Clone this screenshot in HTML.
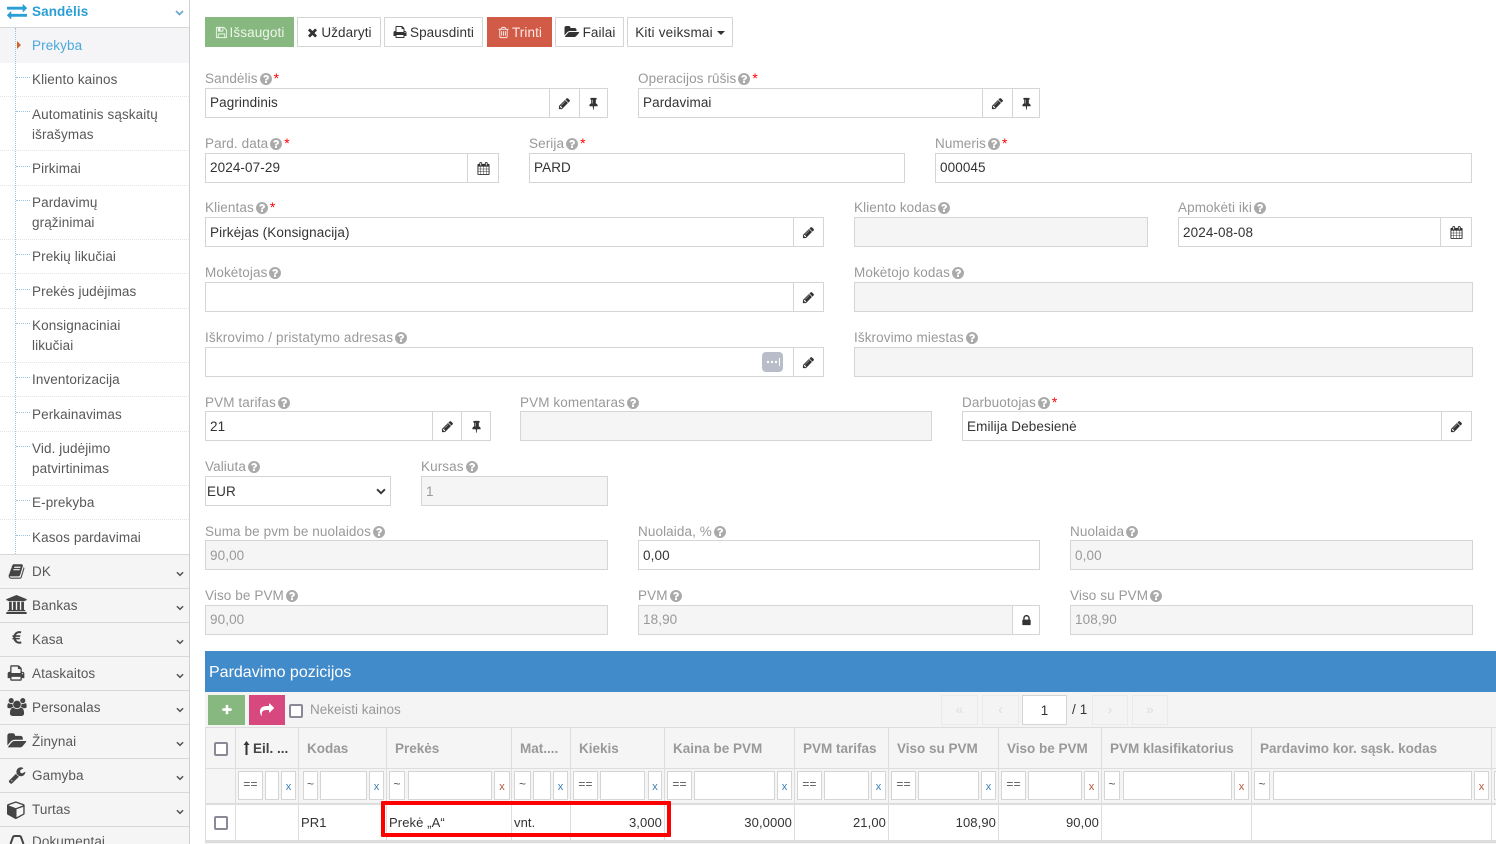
<!DOCTYPE html>
<html><head><meta charset="utf-8"><title>Pardavimas</title>
<style>
html,body{margin:0;padding:0;background:#fff}
#p{position:relative;width:1496px;height:844px;overflow:hidden;background:#fff;font-family:"Liberation Sans",sans-serif;font-size:13.5px;letter-spacing:.1px;color:#333}
#p div,#p span.a,#p svg.a{position:absolute;box-sizing:border-box}
svg{fill:currentColor}
.ni{left:32px;color:#585858;line-height:20px;white-space:nowrap}
.sep{left:0;width:189px;border-top:1px dotted #e4e4e4;height:1px}
.hz{left:16px;width:14px;border-top:1px dotted #9dc3e0;height:1px}
.mr{left:0;width:189px;height:34px;background:#f5f5f5;border-bottom:1px solid #d8d8d8}
.mt{left:32px;top:7px;line-height:20px;color:#585858}
.mi{color:#444;top:8px}
.b{top:17px;height:30px;border:1px solid #d5d5d5;background:#fff;line-height:29px;text-align:center;white-space:nowrap;color:#333}
.l{color:#999;line-height:16px;white-space:nowrap}
.l svg{width:12px;height:12px;vertical-align:-1.5px;margin-left:2px;color:#aaa}
.l i{font-style:normal;color:#f00;margin-left:2px;font-size:14px}
.f{height:30px;border:1px solid #d5d5d5;background:#fff;line-height:28px;padding-left:4px;color:#333;white-space:nowrap}
.t{line-height:30px}
.d{background:#f5f5f5;color:#999}
.ad{height:30px;border:1px solid #d5d5d5;background:#fff;color:#333}
.ad svg{position:absolute;left:50%;top:50%;width:13px;height:13px;margin:-6.5px 0 0 -6.5px}
.v{top:727px;width:1px;height:116px;background:#ddd}
.h{top:727px;height:41px;line-height:43px;font-weight:bold;color:#999;white-space:nowrap;letter-spacing:0}
.fi{top:771px;height:29px;background:#fff;border:1px solid #d5d5d5;font-size:12px;line-height:25px;color:#555;text-align:center}
.x{top:771px;height:29px;background:#fff;border:1px solid #d5d5d5;font-size:11px;line-height:30px;color:#3a7fb5;text-align:center}
.xr{color:#b5533c}
.c{top:805px;height:35px;line-height:35px;white-space:nowrap;color:#333;font-size:13px}
.r{text-align:right}
.pg{top:695px;height:30px;border:1px solid #eaeaea;text-align:center;line-height:27px;color:#ddd;font-size:14px}
.cb{width:14px;height:14px;border:2px solid #8a8a96;border-radius:2px;background:#fff}
</style></head><body>
<svg width="0" height="0" style="position:absolute">
<symbol id="q" viewBox="0 0 1536 1536"><path transform="translate(-128 -128)" d="M1024 1376v-192q0-14-9-23t-23-9h-192q-14 0-23 9t-9 23v192q0 14 9 23t23 9h192q14 0 23-9t9-23zm256-672q0-88-55.5-163t-138.5-116-170-41q-243 0-371 213-15 24 8 42l132 100q7 6 19 6 16 0 25-12 53-68 86-92 34-24 86-24 48 0 85.5 26t37.5 59q0 38-20 61t-68 45q-63 28-115.5 86.5t-52.5 125.5v36q0 14 9 23t23 9h192q14 0 23-9t9-23q0-19 21.5-49.5t54.5-49.5q32-18 49-28.5t46-35 44.5-48 28-60.5 12.5-81zm384 192q0 209-103 385.5t-279.5 279.5-385.5 103-385.5-103-279.5-279.5-103-385.5 103-385.5 279.5-279.5 385.5-103 385.5 103 279.5 279.5 103 385.5z"/></symbol>
<symbol id="pen" viewBox="0 0 1792 1792"><path d="M491 1536l91-91-235-235-91 91v107h128v128h107zm523-928q0-22-22-22-10 0-17 7l-542 542q-7 7-7 17 0 22 22 22 10 0 17-7l542-542q7-7 7-17zm-54-192l416 416-832 832h-416v-416zm683 96q0 53-37 90l-166 166-416-416 166-165q36-38 90-38 53 0 91 38l235 234q37 39 37 91z"/></symbol>
<symbol id="pin" viewBox="0 0 1792 1792"><path d="M800 864v-448q0-14-9-23t-23-9-23 9-9 23v448q0 14 9 23t23 9 23-9 9-23zm672 352q0 26-19 45t-45 19h-429l-51 483q-2 12-10.5 20.5t-20.5 8.5h-1q-27 0-32-27l-76-485h-404q-26 0-45-19t-19-45q0-123 78.5-221.5t177.5-98.5v-512q-52 0-90-38t-38-90 38-90 90-38h640q52 0 90 38t38 90-38 90-90 38v512q99 0 177.5 98.5t78.5 221.5z"/></symbol>
<symbol id="cal" viewBox="0 0 1792 1792"><path d="M192 1664h288v-288h-288v288zm352 0h320v-288h-320v288zm-352-352h288v-320h-288v320zm352 0h320v-320h-320v320zm-352-384h288v-288h-288v288zm736 736h320v-288h-320v288zm-384-736h320v-288h-320v288zm768 736h288v-288h-288v288zm-384-352h320v-320h-320v320zm-352-864v-288q0-13-9.5-22.5t-22.5-9.5h-64q-13 0-22.5 9.5t-9.5 22.5v288q0 13 9.5 22.5t22.5 9.5h64q13 0 22.5-9.5t9.5-22.5zm736 864h288v-320h-288v320zm-384-384h320v-288h-320v288zm384 0h288v-288h-288v288zm32-480v-288q0-13-9.5-22.5t-22.5-9.5h-64q-13 0-22.5 9.5t-9.5 22.5v288q0 13 9.5 22.5t22.5 9.5h64q13 0 22.5-9.5t9.5-22.5zm384-64v1280q0 52-38 90t-90 38h-1408q-52 0-90-38t-38-90v-1280q0-52 38-90t90-38h128v-96q0-66 47-113t113-47h64q66 0 113 47t47 113v96h384v-96q0-66 47-113t113-47h64q66 0 113 47t47 113v96h128q52 0 90 38t38 90z"/></symbol>
<symbol id="print" viewBox="0 0 1792 1792"><path d="M448 1536h896v-256h-896v256zm0-640h896v-384h-160q-40 0-68-28t-28-68v-160h-640v640zm1152 64q0-26-19-45t-45-19-45 19-19 45 19 45 45 19 45-19 19-45zm128 0v416q0 13-9.5 22.5t-22.5 9.5h-224v160q0 40-28 68t-68 28h-960q-40 0-68-28t-28-68v-160h-224q-13 0-22.5-9.5t-9.5-22.5v-416q0-79 56.5-135.5t135.5-56.5h64v-544q0-40 28-68t68-28h672q40 0 88 20t76 48l152 152q28 28 48 76t20 88v256h64q79 0 135.5 56.5t56.5 135.5z"/></symbol>
<symbol id="times" viewBox="0 0 1792 1792"><path d="M1490 1322q0 40-28 68l-136 136q-28 28-68 28t-68-28l-294-294-294 294q-28 28-68 28t-68-28l-136-136q-28-28-28-68t28-68l294-294-294-294q-28-28-28-68t28-68l136-136q28-28 68-28t68 28l294 294 294-294q28-28 68-28t68 28l136 136q28 28 28 68t-28 68l-294 294 294 294q28 28 28 68z"/></symbol>
<symbol id="save" viewBox="0 0 1792 1792"><path d="M512 1536h768v-384h-768v384zm896 0h128v-896q0-14-10-38.5t-20-34.5l-281-281q-10-10-34-20t-39-10v416q0 40-28 68t-68 28h-576q-40 0-68-28t-28-68v-416h-128v1280h128v-416q0-40 28-68t68-28h832q40 0 68 28t28 68v416zm-384-928v-320q0-13-9.5-22.5t-22.5-9.5h-192q-13 0-22.5 9.5t-9.5 22.5v320q0 13 9.5 22.5t22.5 9.5h192q13 0 22.5-9.5t9.5-22.5zm640 32v928q0 40-28 68t-68 28h-1344q-40 0-68-28t-28-68v-1344q0-40 28-68t68-28h928q40 0 88 20t76 48l280 280q28 28 48 76t20 88z"/></symbol>
<symbol id="trash" viewBox="0 0 1792 1792"><path d="M704 736v576q0 14-9 23t-23 9h-64q-14 0-23-9t-9-23v-576q0-14 9-23t23-9h64q14 0 23 9t9 23zm256 0v576q0 14-9 23t-23 9h-64q-14 0-23-9t-9-23v-576q0-14 9-23t23-9h64q14 0 23 9t9 23zm256 0v576q0 14-9 23t-23 9h-64q-14 0-23-9t-9-23v-576q0-14 9-23t23-9h64q14 0 23 9t9 23zm128 724v-948h-896v948q0 22 7 40.5t14.5 27 10.5 8.5h832q3 0 10.5-8.5t14.5-27 7-40.5zm-672-1076h448l-48-117q-7-9-17-11h-317q-10 2-17 11zm928 32v64q0 14-9 23t-23 9h-96v948q0 83-47 143.5t-113 60.5h-832q-66 0-113-58.5t-47-141.5v-952h-96q-14 0-23-9t-9-23v-64q0-14 9-23t23-9h309l70-167q15-37 54-63t79-26h320q40 0 79 26t54 63l70 167h309q14 0 23 9t9 23z"/></symbol>
<symbol id="open" viewBox="0 0 1920 1792"><path d="M1879 952q0 31-31 66l-336 396q-43 51-120.5 86.5t-143.5 35.5h-1088q-34 0-60.5-13t-26.5-43q0-31 31-66l336-396q43-51 120.5-86.5t143.5-35.5h1088q34 0 60.5 13t26.5 43zm-343-344v160h-832q-94 0-197 47.5t-164 119.5l-337 396-5 6q0-4-.5-12.5t-.5-12.5v-960q0-92 66-158t158-66h320q92 0 158 66t66 158v32h544q92 0 158 66t66 158z"/></symbol>
<symbol id="lock" viewBox="0 0 1792 1792"><path d="M640 768h512v-192q0-106-75-181t-181-75-181 75-75 181v192zm832 96v576q0 40-28 68t-68 28h-960q-40 0-68-28t-28-68v-576q0-40 28-68t68-28h32v-192q0-184 132-316t316-132 316 132 132 316v192h32q40 0 68 28t28 68z"/></symbol>
<symbol id="plus" viewBox="0 0 1792 1792"><path d="M1600 736v192q0 40-28 68t-68 28h-416v416q0 40-28 68t-68 28h-192q-40 0-68-28t-28-68v-416h-416q-40 0-68-28t-28-68v-192q0-40 28-68t68-28h416v-416q0-40 28-68t68-28h192q40 0 68 28t28 68v416h416q40 0 68 28t28 68z"/></symbol>
<symbol id="share" viewBox="0 0 1792 1792"><path d="M1792 640q0 26-19 45l-512 512q-19 19-45 19t-45-19-19-45v-256h-224q-98 0-175.5 6t-154 21.5-133 42.5-105.5 69.5-80 101-48.5 138.5-17.5 181q0 55 5 123 0 6 2.5 23.5t2.5 26.5q0 15-8.5 25t-23.5 10q-16 0-28-17-7-9-13-22t-13.5-30-10.5-24q-127-285-127-451 0-199 53-333 162-403 875-403h224v-256q0-26 19-45t45-19 45 19l512 512q19 19 19 45z"/></symbol>
<symbol id="exch" viewBox="0 0 1792 1792"><path d="M1792 1184v192q0 13-9.5 22.5t-22.5 9.5h-1376v192q0 13-9.5 22.5t-22.5 9.5q-12 0-24-10l-319-320q-9-9-9-22 0-14 9-23l320-320q9-9 23-9 13 0 22.5 9.5t9.5 22.5v192h1376q13 0 22.5 9.5t9.5 22.5zm0-544q0 14-9 23l-320 320q-9 9-23 9-13 0-22.5-9.5t-9.5-22.5v-192h-1376q-13 0-22.5-9.5t-9.5-22.5v-192q0-13 9.5-22.5t22.5-9.5h1376v-192q0-14 9-23t23-9q12 0 24 10l319 319q9 9 9 23z"/></symbol>
<symbol id="book" viewBox="0 0 1792 1792"><path d="M1703 478q40 57 18 129l-275 906q-19 64-76.5 107.5t-122.5 43.5h-923q-77 0-148.5-53.5t-99.5-131.5q-24-67-2-127 0-4 3-27t4-37q1-8-3-21.5t-3-19.5q2-11 8-21t16.5-23.5 16.5-23.5q23-38 45-91.5t30-91.5q3-10 .5-30t-.5-28q3-11 17-28t17-23q21-36 42-92t25-90q1-9-2.5-32t.5-28q4-13 22-30.5t22-22.5q19-26 42.5-84.5t27.5-96.5q1-8-3-25.5t-2-26.5q2-8 9-18t18-23 17-21q8-12 16.5-30.5t15-35 16-36 19.5-32 26.5-23.5 36-11.5 47.5 5.5l-1 3q38-9 51-9h761q74 0 114 56t18 130l-274 906q-36 119-71.5 153.5t-128.5 34.5h-869q-27 0-38 15-11 16-1 43 24 70 144 70h923q29 0 56-15.5t35-41.5l300-987q7-22 5-57 38 15 59 43zm-1064 2q-4 13 2 22.5t20 9.5h608q13 0 25.5-9.5t16.5-22.5l21-64q4-13-2-22.5t-20-9.5h-608q-13 0-25.5 9.5t-16.5 22.5zm-83 256q-4 13 2 22.5t20 9.5h608q13 0 25.5-9.5t16.5-22.5l21-64q4-13-2-22.5t-20-9.5h-608q-13 0-25.5 9.5t-16.5 22.5z"/></symbol>
<symbol id="bank" viewBox="0 0 1920 1792"><path d="M960 0l960 384v128h-128q0 26-20.5 45t-48.5 19h-1526q-28 0-48.5-19t-20.5-45h-128v-128zm-704 640h256v768h128v-768h256v768h128v-768h256v768h128v-768h256v768h59q28 0 48.5 19t20.5 45v64h-1664v-64q0-26 20.5-45t48.5-19h59v-768zm1595 960q28 0 48.5 19t20.5 45v128h-1920v-128q0-26 20.5-45t48.5-19h1782z"/></symbol>
<symbol id="eur" viewBox="0 0 1792 1792"><path d="M1360 1307l35 159q3 12-3 22.5t-17 14.5l-5 1q-4 2-10.5 3.5t-16 4.5-21.5 5.5-25.5 5-30 5-33.5 4.5-36.5 3-38.5 1q-234 0-409-130.5t-238-351.5h-95q-13 0-22.5-9.5t-9.5-22.5v-113q0-13 9.5-22.5t22.5-9.5h66q-2-57 1-105h-67q-14 0-23-9t-9-23v-114q0-14 9-23t23-9h98q67-210 243.5-338t400.5-128q102 0 194 23 11 3 20 15 6 11 3 24l-43 159q-3 13-14 19.5t-24 2.5l-4-1q-4-1-11.5-2.5l-17.5-3.5-22.5-3.5-26-3-29-2.5-29.5-1q-126 0-226 64t-150 176h468q16 0 25 12 10 12 7 26l-24 114q-5 26-32 26h-488q-3 47 0 105h459q15 0 25 12 9 12 6 27l-24 112q-2 11-11 18.5t-20 7.5h-387q48 117 149.5 185.5t228.5 68.5q18 0 36-1.5t33.5-3.5 29.5-4.5 24.5-5 18.5-4.5l12-3 5-2q13-5 26 2 12 7 15 21z"/></symbol>
<symbol id="users" viewBox="0 0 1920 1792"><path d="M593 896q-162 5-265 128h-134q-82 0-138-40.5t-56-118.5q0-353 124-353 6 0 43.5 21t97.5 42.5 119 21.5q67 0 133-23-5 37-5 66 0 139 81 256zm1071 637q0 120-73 189.5t-194 69.5h-874q-121 0-194-69.5t-73-189.5q0-53 3.5-103.5t14-109 26.5-108.5 43-97.5 62-81 85.5-53.5 111.5-20q10 0 43 21.5t73 48 107 48 135 21.5 135-21.5 107-48 73-48 43-21.5q61 0 111.5 20t85.5 53.5 62 81 43 97.5 26.5 108.5 14 109 3.5 103.5zm-1024-1277q0 106-75 181t-181 75-181-75-75-181 75-181 181-75 181 75 75 181zm704 384q0 159-112.5 271.5t-271.5 112.5-271.5-112.5-112.5-271.5 112.5-271.5 271.5-112.5 271.5 112.5 112.5 271.5zm576 225q0 78-56 118.5t-138 40.5h-134q-103-123-265-128 81-117 81-256 0-29-5-66 66 23 133 23 59 0 119-21.5t97.5-42.5 43.5-21q124 0 124 353zm-128-609q0 106-75 181t-181 75-181-75-75-181 75-181 181-75 181 75 75 181z"/></symbol>
<symbol id="wrench" viewBox="0 0 1792 1792"><path d="M448 1472q0-26-19-45t-45-19-45 19-19 45 19 45 45 19 45-19 19-45zm644-420l-682 682q-37 37-90 37-52 0-91-37l-106-108q-38-36-38-90 0-53 38-91l681-681q39 98 114.5 173.5t173.5 114.5zm634-435q0 39-23 106-47 134-164.5 217.5t-258.5 83.5q-185 0-316.5-131.5t-131.5-316.5 131.5-316.5 316.5-131.5q58 0 121.5 16.5t107.5 46.5q16 11 16 28t-16 28l-293 169v224l193 107q5-3 79-48.5t135.5-81 70.5-35.5q15 0 23.5 10t8.5 25z"/></symbol>
<symbol id="cube" viewBox="0 0 1792 1792"><path d="M896 1629l640-349v-636l-640 233v752zm-64-865l698-254-698-254-698 254zm832-252v768q0 35-18 65t-49 47l-704 384q-28 16-61 16t-61-16l-704-384q-31-17-49-47t-18-65v-768q0-40 23-73t61-47l704-256q22-8 44-8t44 8l704 256q38 14 61 47t23 73z"/></symbol>
<symbol id="chev" viewBox="0 0 9 6"><path d="M1 1l3.500 3.500L8 1" fill="none" stroke="currentColor" stroke-width="1.700"/></symbol>
</svg>
<div id="p">

<!-- SIDEBAR -->
<div style="left:189px;top:0;width:1px;height:844px;background:#d0d0d0"></div>
<div style="left:0;top:0;width:189px;height:28px;border-bottom:1px solid #d8d8d8;background:#fff"></div>
<svg class="a" style="left:7px;top:1px;color:#2a9fd6" width="20" height="20"><use href="#exch"/></svg>
<div style="left:32px;top:2px;line-height:20px;font-weight:bold;color:#2a9fd6">Sandėlis</div>
<svg class="a" style="left:175px;top:10px;color:#6aa8cf" width="9" height="6"><use href="#chev"/></svg>
<div style="left:0;top:28px;width:189px;height:35px;background:#f5f5f8"></div>
<div style="left:15px;top:28px;width:1px;height:526px;border-left:1px dotted #9dc3e0"></div>
<div style="left:17px;top:41px;width:0;height:0;border-left:4px solid #d2662b;border-top:4px solid transparent;border-bottom:4px solid transparent"></div>
<div class="ni" style="top:36px;color:#4aa8dc">Prekyba</div>

<div class="hz" style="top:77px"></div><div class="ni" style="top:70px">Kliento kainos</div>
<div class="sep" style="top:96px"></div>
<div class="hz" style="top:111px"></div><div class="ni" style="top:105px">Automatinis sąskaitų<br>išrašymas</div>
<div class="sep" style="top:150px"></div>
<div class="hz" style="top:166px"></div><div class="ni" style="top:159px">Pirkimai</div>
<div class="sep" style="top:185px"></div>
<div class="hz" style="top:200px"></div><div class="ni" style="top:193px">Pardavimų<br>grąžinimai</div>
<div class="sep" style="top:239px"></div>
<div class="hz" style="top:254px"></div><div class="ni" style="top:247px">Prekių likučiai</div>
<div class="sep" style="top:273px"></div>
<div class="hz" style="top:289px"></div><div class="ni" style="top:282px">Prekės judėjimas</div>
<div class="sep" style="top:308px"></div>
<div class="hz" style="top:323px"></div><div class="ni" style="top:316px">Konsignaciniai<br>likučiai</div>
<div class="sep" style="top:362px"></div>
<div class="hz" style="top:377px"></div><div class="ni" style="top:370px">Inventorizacija</div>
<div class="sep" style="top:396px"></div>
<div class="hz" style="top:412px"></div><div class="ni" style="top:405px">Perkainavimas</div>
<div class="sep" style="top:431px"></div>
<div class="hz" style="top:446px"></div><div class="ni" style="top:439px">Vid. judėjimo<br>patvirtinimas</div>
<div class="sep" style="top:485px"></div>
<div class="hz" style="top:500px"></div><div class="ni" style="top:493px">E-prekyba</div>
<div class="sep" style="top:519px"></div>
<div class="hz" style="top:535px"></div><div class="ni" style="top:528px">Kasos pardavimai</div>

<div style="left:0;top:554px;width:189px;height:1px;background:#d8d8d8"></div>
<div class="mr" style="top:555px"><svg class="a mi" style="left:8px;top:8px" width="17" height="17"><use href="#book"/></svg><div class="mt">DK</div><svg class="a" style="left:176px;top:16px;color:#555" width="8" height="6"><use href="#chev"/></svg></div>
<div class="mr" style="top:589px"><svg class="a mi" style="left:6px;top:6px" width="21" height="19"><use href="#bank"/></svg><div class="mt">Bankas</div><svg class="a" style="left:176px;top:16px;color:#555" width="8" height="6"><use href="#chev"/></svg></div>
<div class="mr" style="top:623px"><svg class="a mi" style="left:9px;top:7px" width="16" height="16"><use href="#eur"/></svg><div class="mt">Kasa</div><svg class="a" style="left:176px;top:16px;color:#555" width="8" height="6"><use href="#chev"/></svg></div>
<div class="mr" style="top:657px"><svg class="a mi" style="left:7px;top:7px" width="18" height="18"><use href="#print"/></svg><div class="mt">Ataskaitos</div><svg class="a" style="left:176px;top:16px;color:#555" width="8" height="6"><use href="#chev"/></svg></div>
<div class="mr" style="top:691px"><svg class="a mi" style="left:7px;top:7px" width="20" height="18"><use href="#users"/></svg><div class="mt">Personalas</div><svg class="a" style="left:176px;top:16px;color:#555" width="8" height="6"><use href="#chev"/></svg></div>
<div class="mr" style="top:725px"><svg class="a mi" style="left:7px;top:7px" width="20" height="18"><use href="#open"/></svg><div class="mt">Žinynai</div><svg class="a" style="left:176px;top:16px;color:#555" width="8" height="6"><use href="#chev"/></svg></div>
<div class="mr" style="top:759px"><svg class="a mi" style="left:8px;top:7px" width="18" height="18"><use href="#wrench"/></svg><div class="mt">Gamyba</div><svg class="a" style="left:176px;top:16px;color:#555" width="8" height="6"><use href="#chev"/></svg></div>
<div class="mr" style="top:793px"><svg class="a mi" style="left:7px;top:7px" width="19" height="19"><use href="#cube"/></svg><div class="mt">Turtas</div><svg class="a" style="left:176px;top:16px;color:#555" width="8" height="6"><use href="#chev"/></svg></div>
<div style="left:0;top:827px;width:189px;height:17px;background:#f5f5f5"></div>
<svg class="a" style="left:9px;top:835px;color:#444" width="16" height="9"><path d="M1.500 9 L4 2 Q4.500 1 6 1 H10 Q11.500 1 12 2 L14.500 9" fill="none" stroke="currentColor" stroke-width="2"/></svg>
<div class="mt" style="top:832px">Dokumentai</div>

<!-- TOOLBAR -->
<div class="b" style="left:205px;width:89px;background:#87b87f;border-color:#87b87f;color:#edf5eb"><svg width="13" height="13" style="vertical-align:-2px;margin-right:2px"><use href="#save"/></svg>Išsaugoti</div>
<div class="b" style="left:297px;width:84px"><svg width="13" height="13" style="vertical-align:-2px;margin-right:2px"><use href="#times"/></svg>Uždaryti</div>
<div class="b" style="left:384px;width:99px"><svg width="14" height="14" style="vertical-align:-2px;margin-right:3px"><use href="#print"/></svg>Spausdinti</div>
<div class="b" style="left:487px;width:65px;background:#d15b47;border-color:#d15b47;color:#fbe9e6"><svg width="13" height="13" style="vertical-align:-2px;margin-right:2px"><use href="#trash"/></svg>Trinti</div>
<div class="b" style="left:555px;width:69px"><svg width="16" height="14" style="vertical-align:-2px;margin-right:3px"><use href="#open"/></svg>Failai</div>
<div class="b" style="left:627px;width:106px;letter-spacing:.2px">Kiti veiksmai <span style="display:inline-block;width:0;height:0;border:4px solid transparent;border-top-color:#333;border-bottom:0;vertical-align:2px"></span></div>

<!-- ROW 1 -->
<div class="l" style="left:205px;top:70px">Sandėlis<svg><use href="#q"/></svg><i>*</i></div>
<div class="f" style="left:205px;top:88px;width:403px">Pagrindinis</div>
<div class="ad" style="left:549px;top:88px;width:31px"><svg><use href="#pen"/></svg></div>
<div class="ad" style="left:579px;top:88px;width:29px"><svg><use href="#pin"/></svg></div>
<div class="l" style="left:638px;top:70px">Operacijos rūšis<svg><use href="#q"/></svg><i>*</i></div>
<div class="f" style="left:638px;top:88px;width:402px">Pardavimai</div>
<div class="ad" style="left:982px;top:88px;width:31px"><svg><use href="#pen"/></svg></div>
<div class="ad" style="left:1012px;top:88px;width:28px"><svg><use href="#pin"/></svg></div>

<!-- ROW 2 -->
<div class="l" style="left:205px;top:135px">Pard. data<svg><use href="#q"/></svg><i>*</i></div>
<div class="f" style="left:205px;top:153px;width:294px">2024-07-29</div>
<div class="ad" style="left:467px;top:153px;width:32px"><svg><use href="#cal"/></svg></div>
<div class="l" style="left:529px;top:135px">Serija<svg><use href="#q"/></svg><i>*</i></div>
<div class="f" style="left:529px;top:153px;width:376px">PARD</div>
<div class="l" style="left:935px;top:135px">Numeris<svg><use href="#q"/></svg><i>*</i></div>
<div class="f" style="left:935px;top:153px;width:537px">000045</div>

<!-- ROW 3 -->
<div class="l" style="left:205px;top:199px">Klientas<svg><use href="#q"/></svg><i>*</i></div>
<div class="f t" style="left:205px;top:217px;width:619px">Pirkėjas (Konsignacija)</div>
<div class="ad" style="left:793px;top:217px;width:31px"><svg><use href="#pen"/></svg></div>
<div class="l" style="left:854px;top:200px">Kliento kodas<svg><use href="#q"/></svg></div>
<div class="f d" style="left:854px;top:217px;width:294px"></div>
<div class="l" style="left:1178px;top:200px">Apmokėti iki<svg><use href="#q"/></svg></div>
<div class="f t" style="left:1178px;top:217px;width:294px">2024-08-08</div>
<div class="ad" style="left:1440px;top:217px;width:32px"><svg><use href="#cal"/></svg></div>

<!-- ROW 4 -->
<div class="l" style="left:205px;top:265px">Mokėtojas<svg><use href="#q"/></svg></div>
<div class="f" style="left:205px;top:282px;width:619px"></div>
<div class="ad" style="left:793px;top:282px;width:31px"><svg><use href="#pen"/></svg></div>
<div class="l" style="left:854px;top:265px">Mokėtojo kodas<svg><use href="#q"/></svg></div>
<div class="f d" style="left:854px;top:282px;width:619px"></div>

<!-- ROW 5 -->
<div class="l" style="left:205px;top:330px;letter-spacing:.17px">Iškrovimo / pristatymo adresas<svg><use href="#q"/></svg></div>
<div class="f" style="left:205px;top:347px;width:619px"></div>
<div class="ad" style="left:793px;top:347px;width:31px"><svg><use href="#pen"/></svg></div>
<div style="left:762px;top:352px;width:21px;height:20px;border-radius:4px;background:#b8bdc9"></div>
<svg class="a" style="left:762px;top:352px" width="21" height="20"><g fill="#fff"><circle cx="6" cy="10" r="1.200"/><circle cx="10" cy="10" r="1.200"/><circle cx="14" cy="10" r="1.200"/><rect x="17" y="6" width="1" height="8"/></g></svg>
<div class="l" style="left:854px;top:330px">Iškrovimo miestas<svg><use href="#q"/></svg></div>
<div class="f d" style="left:854px;top:347px;width:619px"></div>

<!-- ROW 6 -->
<div class="l" style="left:205px;top:395px">PVM tarifas<svg><use href="#q"/></svg></div>
<div class="f t" style="left:205px;top:411px;width:286px">21</div>
<div class="ad" style="left:432px;top:411px;width:30px"><svg><use href="#pen"/></svg></div>
<div class="ad" style="left:461px;top:411px;width:30px"><svg><use href="#pin"/></svg></div>
<div class="l" style="left:520px;top:395px">PVM komentaras<svg><use href="#q"/></svg></div>
<div class="f d" style="left:520px;top:411px;width:412px"></div>
<div class="l" style="left:962px;top:394px">Darbuotojas<svg><use href="#q"/></svg><i>*</i></div>
<div class="f t" style="left:962px;top:411px;width:510px">Emilija Debesienė</div>
<div class="ad" style="left:1441px;top:411px;width:31px"><svg><use href="#pen"/></svg></div>

<!-- ROW 7 -->
<div class="l" style="left:205px;top:459px">Valiuta<svg><use href="#q"/></svg></div>
<div class="f t" style="left:205px;top:476px;width:186px;padding-left:1px">EUR</div>
<svg class="a" style="left:376px;top:488px;color:#333" width="10" height="7"><use href="#chev"/></svg>
<div class="l" style="left:421px;top:459px">Kursas<svg><use href="#q"/></svg></div>
<div class="f d t" style="left:421px;top:476px;width:187px">1</div>

<!-- ROW 8 -->
<div class="l" style="left:205px;top:524px">Suma be pvm be nuolaidos<svg><use href="#q"/></svg></div>
<div class="f d t" style="left:205px;top:540px;width:403px">90,00</div>
<div class="l" style="left:638px;top:524px">Nuolaida, %<svg><use href="#q"/></svg></div>
<div class="f t" style="left:638px;top:540px;width:402px">0,00</div>
<div class="l" style="left:1070px;top:524px">Nuolaida<svg><use href="#q"/></svg></div>
<div class="f d t" style="left:1070px;top:540px;width:403px">0,00</div>

<!-- ROW 9 -->
<div class="l" style="left:205px;top:588px">Viso be PVM<svg><use href="#q"/></svg></div>
<div class="f d" style="left:205px;top:605px;width:403px">90,00</div>
<div class="l" style="left:638px;top:588px">PVM<svg><use href="#q"/></svg></div>
<div class="f d" style="left:638px;top:605px;width:402px">18,90</div>
<div class="ad" style="left:1012px;top:605px;width:28px"><svg><use href="#lock"/></svg></div>
<div class="l" style="left:1070px;top:588px">Viso su PVM<svg><use href="#q"/></svg></div>
<div class="f d" style="left:1070px;top:605px;width:403px">108,90</div>

<!-- PANEL -->
<div style="left:205px;top:651px;width:1291px;height:41px;background:#428bca;color:#fff;font-size:16px;line-height:43px;padding-left:4px;letter-spacing:0">Pardavimo pozicijos</div>
<div style="left:205px;top:692px;width:1291px;height:36px;background:#f4f4f4;border-bottom:1px solid #ddd"></div>
<div style="left:208px;top:695px;width:37px;height:30px;background:#87b87f"></div>
<svg class="a" style="left:221px;top:704px;color:#fff" width="12" height="12"><use href="#plus"/></svg>
<div style="left:249px;top:695px;width:36px;height:30px;background:#d6487e"></div>
<svg class="a" style="left:260px;top:703px;color:#fff" width="14" height="14"><use href="#share"/></svg>
<div class="cb" style="left:289px;top:704px"></div>
<div style="left:310px;top:701px;line-height:17px;color:#999;letter-spacing:0">Nekeisti kainos</div>
<div class="pg" style="left:941px;width:37px">«</div>
<div class="pg" style="left:982px;width:37px">‹</div>
<div style="left:1022px;top:695px;width:45px;height:30px;border:1px solid #d5d5d5;background:#fff;text-align:center;line-height:29px">1</div>
<div style="left:1072px;top:695px;line-height:30px;color:#333">/ 1</div>
<div class="pg" style="left:1092px;width:36px">›</div>
<div class="pg" style="left:1132px;width:36px">»</div>

<!-- TABLE -->
<div style="left:205px;top:728px;width:1291px;height:40px;background:#f5f5f5"></div>
<div style="left:205px;top:768px;width:1291px;height:36px;background:#f5f5f5;border-top:1px solid #ddd"></div>
<div style="left:205px;top:803px;width:1291px;height:2px;background:#ddd"></div>
<div style="left:205px;top:840px;width:1291px;height:3px;background:#ddd"></div>
<div style="left:205px;top:843px;width:1291px;height:1px;background:#f5f5f5"></div>
<div class="v" style="left:205px"></div><div class="v" style="left:235px"></div><div class="v" style="left:298px"></div><div class="v" style="left:386px"></div><div class="v" style="left:511px"></div><div class="v" style="left:570px"></div><div class="v" style="left:664px"></div><div class="v" style="left:794px"></div><div class="v" style="left:888px"></div><div class="v" style="left:998px"></div><div class="v" style="left:1101px"></div><div class="v" style="left:1251px"></div><div class="v" style="left:1491px"></div>

<div class="cb" style="left:214px;top:742px"></div>
<svg class="a" style="left:243px;top:741px;color:#333" width="7" height="14"><path d="M3.500 0L6.500 4H4.500V14H2.500V4H.5z"/></svg>
<div class="h" style="left:253px;color:#444">Eil. ...</div>
<div class="h" style="left:307px">Kodas</div>
<div class="h" style="left:395px">Prekės</div>
<div class="h" style="left:520px">Mat....</div>
<div class="h" style="left:579px">Kiekis</div>
<div class="h" style="left:673px">Kaina be PVM</div>
<div class="h" style="left:803px">PVM tarifas</div>
<div class="h" style="left:897px">Viso su PVM</div>
<div class="h" style="left:1007px">Viso be PVM</div>
<div class="h" style="left:1110px">PVM klasifikatorius</div>
<div class="h" style="left:1260px">Pardavimo kor. sąsk. kodas</div>

<div class="fi" style="left:238px;width:25px">==</div><div class="fi" style="left:265px;width:14px"></div><div class="x" style="left:281px;width:15px">x</div>
<div class="fi" style="left:303px;width:15px">~</div><div class="fi" style="left:320px;width:47px"></div><div class="x" style="left:369px;width:15px">x</div>
<div class="fi" style="left:389px;width:16px">~</div><div class="fi" style="left:408px;width:84px"></div><div class="x xr" style="left:494px;width:16px">x</div>
<div class="fi" style="left:514px;width:17px">~</div><div class="fi" style="left:533px;width:18px"></div><div class="x" style="left:553px;width:15px">x</div>
<div class="fi" style="left:573px;width:25px">==</div><div class="fi" style="left:600px;width:45px"></div><div class="x" style="left:648px;width:14px">x</div>
<div class="fi" style="left:667px;width:25px">==</div><div class="fi" style="left:694px;width:81px"></div><div class="x" style="left:777px;width:15px">x</div>
<div class="fi" style="left:797px;width:25px">==</div><div class="fi" style="left:824px;width:45px"></div><div class="x" style="left:871px;width:15px">x</div>
<div class="fi" style="left:891px;width:25px">==</div><div class="fi" style="left:918px;width:61px"></div><div class="x" style="left:981px;width:15px">x</div>
<div class="fi" style="left:1001px;width:25px">==</div><div class="fi" style="left:1028px;width:54px"></div><div class="x xr" style="left:1084px;width:15px">x</div>
<div class="fi" style="left:1104px;width:16px">~</div><div class="fi" style="left:1123px;width:109px"></div><div class="x xr" style="left:1234px;width:15px">x</div>
<div class="fi" style="left:1254px;width:16px">~</div><div class="fi" style="left:1273px;width:199px"></div><div class="x xr" style="left:1474px;width:15px">x</div>
<div class="fi" style="left:1494px;width:10px"></div>

<div class="cb" style="left:214px;top:816px"></div>
<div class="c" style="left:301px">PR1</div>
<div class="c" style="left:389px">Prekė „A“</div>
<div class="c" style="left:514px">vnt.</div>
<div class="c r" style="left:570px;width:92px">3,000</div>
<div class="c r" style="left:664px;width:128px">30,0000</div>
<div class="c r" style="left:794px;width:92px">21,00</div>
<div class="c r" style="left:888px;width:108px">108,90</div>
<div class="c r" style="left:998px;width:101px">90,00</div>

<div style="left:381px;top:801px;width:290px;height:36px;border:4px solid #f00;border-radius:1px"></div>
</div>
</body></html>
